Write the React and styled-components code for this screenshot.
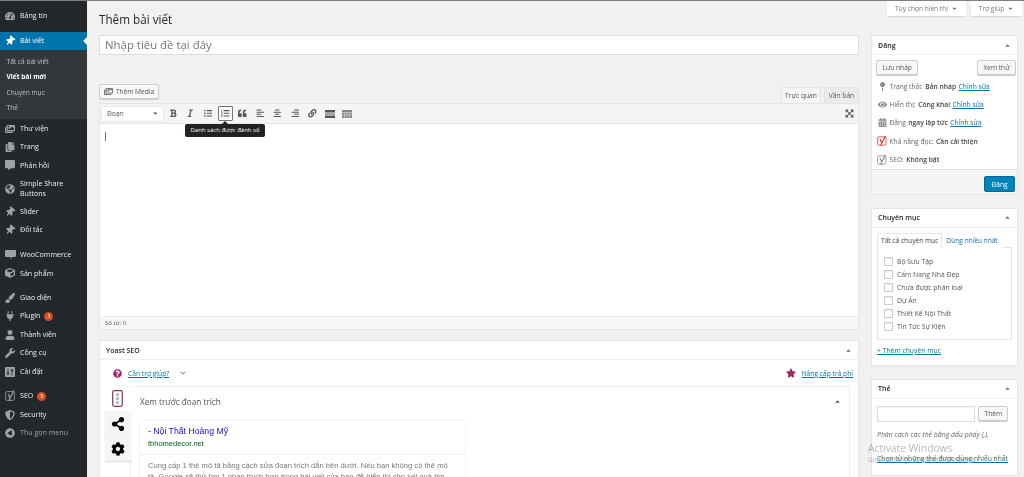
import React from 'react'
import styled, { createGlobalStyle } from 'styled-components'
import {
  FaTachometerAlt, FaThumbtack, FaImages, FaCopy, FaCommentAlt, FaShareAlt, FaCube, FaGlobeAmericas,
  FaPaintBrush, FaPlug, FaUser, FaWrench, FaShieldAlt, FaBold, FaItalic,
  FaListUl, FaListOl, FaQuoteLeft, FaAlignLeft, FaAlignCenter, FaAlignRight, FaLink,
  FaCog, FaStar, FaQuestionCircle, FaChevronDown, FaMapPin, FaEye, FaCalendarAlt,
  FaCaretUp, FaCaretDown, FaPlayCircle, FaExpandArrowsAlt,
} from 'react-icons/fa'

const GlobalStyle = createGlobalStyle`
  html, body { margin: 0; height: 477px; overflow: hidden; background: #f1f1f1; }
  body { font-family: "Open Sans", "Noto Sans", sans-serif; font-size: 8px; color: #444; }
  * { box-sizing: border-box; }
`

function YoastMark({ color }) {
  return (
    <svg width="11" height="12" viewBox="0 0 11 12">
      <rect x="0.6" y="1.6" width="8.8" height="8.8" rx="1.5" fill="none" stroke={color} strokeWidth="0.8" />
      <path d="M3 4l2 4-1 3M9 0.5L5 8" fill="none" stroke={color} strokeWidth="1.2" />
    </svg>
  )
}

function WooIcon() {
  return (
    <svg width="11" height="10" viewBox="0 0 11 10">
      <path d="M1 0h9a1 1 0 0 1 1 1v5a1 1 0 0 1-1 1H7L6 9.5 5.5 7H1a1 1 0 0 1-1-1V1a1 1 0 0 1 1-1z" fill="#9ea3a8" />
    </svg>
  )
}

function SettingsIcon() {
  return (
    <svg width="10" height="10" viewBox="0 0 10 10">
      <rect width="10" height="10" rx="1" fill="#9ea3a8" />
      <path d="M3 1.5v7M7 1.5v7" stroke="#23282d" strokeWidth="0.8" />
      <rect x="1.8" y="5.5" width="2.4" height="1.4" fill="#23282d" />
      <rect x="5.8" y="2.8" width="2.4" height="1.4" fill="#23282d" />
    </svg>
  )
}

function TrafficLight() {
  return (
    <svg width="11" height="17" viewBox="0 0 11 17">
      <rect x="0.7" y="0.7" width="9.6" height="15.6" rx="1.5" fill="none" stroke="#843760" strokeWidth="1.2" />
      <circle cx="5.5" cy="4.5" r="1.7" fill="#bbb" />
      <circle cx="5.5" cy="8.5" r="1.7" fill="#bbb" />
      <circle cx="5.5" cy="12.5" r="1.7" fill="#bbb" />
    </svg>
  )
}

function HrIcon() {
  return (
    <svg width="10" height="8" viewBox="0 0 10 8">
      <rect width="10" height="2.5" fill="#555" />
      <rect y="3.5" width="10" height="1" fill="#555" />
      <rect y="5.5" width="10" height="2.5" fill="#555" />
    </svg>
  )
}

function SinkIcon() {
  return (
    <svg width="10" height="8" viewBox="0 0 10 8">
      <rect width="10" height="8" fill="#888" />
      <path d="M0 2.5h10M0 5h10M2.5 2.5v5.500M5 2.500v5.500M7.500 2.500v5.500" stroke="#ddd" strokeWidth="0.6" />
    </svg>
  )
}

const Pin = styled(FaThumbtack)`
  transform: rotate(40deg);
`

const menuGroups = [
  [{ icon: <FaTachometerAlt />, label: 'Bảng tin' }],
  [
    { icon: <Pin color="#fff" />, label: 'Bài viết', active: true },
    { icon: <FaImages />, label: 'Thư viện' },
    { icon: <FaCopy />, label: 'Trang' },
    { icon: <FaCommentAlt />, label: 'Phản hồi' },
    { icon: <FaGlobeAmericas />, label: 'Simple Share Buttons', tall: true },
    { icon: <Pin />, label: 'Slider' },
    { icon: <Pin />, label: 'Đối tác' },
  ],
  [
    { icon: <WooIcon />, label: 'WooCommerce' },
    { icon: <FaCube />, label: 'Sản phẩm' },
  ],
  [
    { icon: <FaPaintBrush />, label: 'Giao diện' },
    { icon: <FaPlug />, label: 'Plugin', badge: 3 },
    { icon: <FaUser />, label: 'Thành viên' },
    { icon: <FaWrench />, label: 'Công cụ' },
    { icon: <SettingsIcon />, label: 'Cài đặt' },
  ],
  [
    { icon: <YoastMark color="#9ea3a8" />, label: 'SEO', badge: 5 },
    { icon: <FaShieldAlt />, label: 'Security' },
    { icon: <FaPlayCircle style={{ transform: 'scaleX(-1)' }} />, label: 'Thu gọn menu', muted: true },
  ],
]

const subItems = [
  { label: 'Tất cả bài viết' },
  { label: 'Viết bài mới', current: true },
  { label: 'Chuyên mục' },
  { label: 'Thẻ' },
]

const toolbarIcons = [
  { icon: <FaBold /> },
  { icon: <FaItalic /> },
  { icon: <FaListUl /> },
  { icon: <FaListOl />, active: true },
  { icon: <FaQuoteLeft /> },
  { icon: <FaAlignLeft /> },
  { icon: <FaAlignCenter /> },
  { icon: <FaAlignRight /> },
  { icon: <FaLink /> },
  { icon: <HrIcon /> },
  { icon: <SinkIcon /> },
]

const categories = ['Bộ Sưu Tập', 'Cẩm Nang Nhà Đẹp', 'Chưa được phân loại', 'Dự Án', 'Thiết Kế Nội Thất', 'Tin Tức Sự Kiện']

function App() {
  return (
    <Page>
      <GlobalStyle />
      <Sidebar>
        {menuGroups.map((group, i) => (
          <MenuGroup key={i}>
            {group.map(item => (
              <React.Fragment key={item.label}>
                <MenuItem $active={item.active} $tall={item.tall} $muted={item.muted}>
                  <MenuIcon>{item.icon}</MenuIcon>
                  <span>
                    {item.label}
                    {item.badge && <Badge>{item.badge}</Badge>}
                  </span>
                  {item.active && <ActiveArrow />}
                </MenuItem>
                {item.active && (
                  <SubMenu>
                    {subItems.map(s => (
                      <SubItem key={s.label} $current={s.current}>{s.label}</SubItem>
                    ))}
                  </SubMenu>
                )}
              </React.Fragment>
            ))}
          </MenuGroup>
        ))}
      </Sidebar>

      <Content>
        <TopTabs>
          <TopTab $width={79}>Tùy chọn hiển thị <FaCaretDown /></TopTab>
          <TopTab $width={51}>Trợ giúp <FaCaretDown /></TopTab>
        </TopTabs>

        <Columns>
          <MainCol>
            <Heading>Thêm bài viết</Heading>
            <TitleInput>Nhập tiêu đề tại đây</TitleInput>

            <EditorTop>
              <MediaButton><FaImages /> Thêm Media</MediaButton>
              <ModeTabs>
                <ModeTab $active $width={40}>Trực quan</ModeTab>
                <ModeTab $width={35}>Văn bản</ModeTab>
              </ModeTabs>
            </EditorTop>

            <Editor>
              <Toolbar>
                <FormatSelect>Đoạn <FaCaretDown /></FormatSelect>
                {toolbarIcons.map((t, i) => (
                  <ToolButton key={i} $active={t.active}>
                    {t.icon}
                    {t.active && <Tooltip>Danh sách được đánh số</Tooltip>}
                  </ToolButton>
                ))}
                <Expand><FaExpandArrowsAlt /></Expand>
              </Toolbar>
              <EditArea><Caret /></EditArea>
              <StatusBar>Số từ: 0</StatusBar>
            </Editor>

            <YoastBox>
              <BoxHeader>Yoast SEO <FaCaretUp /></BoxHeader>
              <HelpRow>
                <HelpGroup>
                  <FaQuestionCircle color="#a4286a" size={9} />
                  <HelpLink>Cần trợ giúp?</HelpLink>
                  <FaChevronDown color="#a4286a" size={6} opacity={0.6} style={{ marginLeft: 5 }} />
                </HelpGroup>
                <HelpGroup>
                  <FaStar color="#a4286a" size={10} />
                  <HelpLink>Nâng cấp trả phí</HelpLink>
                </HelpGroup>
              </HelpRow>
              <YoastBody>
                <SideTabs>
                  <SideTab $active><TrafficLight /></SideTab>
                  <SideTab><FaShareAlt /></SideTab>
                  <SideTab><FaCog /></SideTab>
                </SideTabs>
                <SnippetPanel>
                  <SnippetTitle>Xem trước đoạn trích <FaCaretUp /></SnippetTitle>
                  <Preview>
                    <PreviewHead>
                      <PreviewLink>- Nội Thất Hoàng Mỹ</PreviewLink>
                      <PreviewUrl>tbhomedecor.net</PreviewUrl>
                    </PreviewHead>
                    <PreviewText>
                      Cung cấp 1 thẻ mô tả bằng cách sửa đoạn trích dẫn bên dưới. Nếu bạn không có thẻ mô
                      tả. Google sẽ thử tìm 1 phần thích hợp trong bài viết của bạn để hiển thị cho kết quả tìm
                    </PreviewText>
                  </Preview>
                </SnippetPanel>
              </YoastBody>
            </YoastBox>
          </MainCol>

          <SideCol>
            <SideBox>
              <BoxHeader>Đăng <FaCaretUp /></BoxHeader>
              <PublishTop>
                <GrayButton>Lưu nháp</GrayButton>
                <GrayButton>Xem thử</GrayButton>
              </PublishTop>
              <MetaRow><MetaIcon><FaMapPin /></MetaIcon>Trạng thái: <b>Bản nháp</b> <a>Chỉnh sửa</a></MetaRow>
              <MetaRow><MetaIcon><FaEye /></MetaIcon>Hiển thị: <b>Công khai</b> <a>Chỉnh sửa</a></MetaRow>
              <MetaRow><MetaIcon><FaCalendarAlt /></MetaIcon>Đăng <b>ngay lập tức</b> <a>Chỉnh sửa</a></MetaRow>
              <MetaRow><MetaIcon><YoastMark color="#dc3232" /></MetaIcon>Khả năng đọc: <b>Cần cải thiện</b></MetaRow>
              <MetaRow><MetaIcon><YoastMark color="#888" /></MetaIcon>SEO: <b>Không bật</b></MetaRow>
              <PublishFoot><PrimaryButton>Đăng</PrimaryButton></PublishFoot>
            </SideBox>

            <SideBox>
              <BoxHeader>Chuyên mục <FaCaretUp /></BoxHeader>
              <BoxBody>
                <CatTabs>
                  <CatTab $active>Tất cả chuyên mục</CatTab>
                  <CatTab>Dùng nhiều nhất</CatTab>
                </CatTabs>
                <CatList>
                  {categories.map(c => (
                    <CatItem key={c}><Check />{c}</CatItem>
                  ))}
                </CatList>
                <AddLink>+ Thêm chuyên mục</AddLink>
              </BoxBody>
            </SideBox>

            <SideBox>
              <BoxHeader>Thẻ <FaCaretUp /></BoxHeader>
              <BoxBody>
                <TagRow>
                  <TagInput />
                  <GrayButton>Thêm</GrayButton>
                </TagRow>
                <TagHint>Phân cách các thẻ bằng dấu phẩy (,).</TagHint>
                <TagLink>Chọn từ những thẻ được dùng nhiều nhất</TagLink>
              </BoxBody>
            </SideBox>
          </SideCol>
        </Columns>
      </Content>

      <Watermark>
        <WatermarkTitle>Activate Windows</WatermarkTitle>
        <div>Go to Settings to activate Windows.</div>
      </Watermark>
    </Page>
  )
}

export default App

const Page = styled.div`
  display: flex;
  width: 1024px;
  height: 477px;
  overflow: hidden;
  position: relative;
  border-top: 1px solid #7d7f82;
  filter: blur(0.3px);
`

const Sidebar = styled.nav`
  width: 87px;
  flex: none;
  background: #23282d;
  padding-top: 6px;
  color: #eee;
`

const MenuGroup = styled.div`
  margin-bottom: 6.4px;
`

const MenuItem = styled.div`
  position: relative;
  display: flex;
  align-items: center;
  min-height: ${p => (p.$tall ? '28px' : '18.4px')};
  line-height: 9.5px;
  font-size: 7.1px;
  background: ${p => (p.$active ? '#0073aa' : 'transparent')};
  color: ${p => (p.$muted ? '#9ea3a8' : p.$active ? '#fff' : '#eee')};
`

const MenuIcon = styled.div`
  width: 20px;
  flex: none;
  display: flex;
  justify-content: center;
  font-size: 10px;
  color: #9ea3a8;
`

const ActiveArrow = styled.div`
  position: absolute;
  right: 0;
  top: 5px;
  border: 4px solid transparent;
  border-right-color: #f1f1f1;
  border-left: 0;
`

const Badge = styled.span`
  display: inline-block;
  width: 9px;
  height: 9px;
  line-height: 9px;
  margin-left: 4px;
  border-radius: 50%;
  background: #d54e21;
  color: #fff;
  font-size: 5.5px;
  text-align: center;
`

const SubMenu = styled.div`
  background: #32373c;
  padding: 4px 0 4px 6.5px;
`

const SubItem = styled.div`
  height: 15.3px;
  line-height: 15.3px;
  font-size: 6.6px;
  color: ${p => (p.$current ? '#fff' : 'rgba(240,245,250,0.7)')};
  font-weight: ${p => (p.$current ? 700 : 400)};
`

const Content = styled.main`
  flex: 1;
  padding: 0 6px 0 12px;
  min-width: 0;
`

const TopTabs = styled.div`
  height: 0;
  display: flex;
  justify-content: flex-end;
  gap: 5px;
  margin-right: -4px;
`

const TopTab = styled.div`
  width: ${p => p.$width}px;
  height: 15px;
  flex: none;
  display: flex;
  align-items: center;
  justify-content: center;
  gap: 3px;
  background: #fff;
  box-shadow: 0 1px 1px rgba(0,0,0,0.1);
  font-size: 6.6px;
  color: #72777c;
  svg { font-size: 7px; }
`

const Columns = styled.div`
  display: grid;
  grid-template-columns: 760px 147px;
  gap: 12px;
`

const MainCol = styled.div`
  min-width: 0;
`

const SideCol = styled.div`
  padding-top: 34px;
  display: flex;
  flex-direction: column;
  gap: 13px;
`

const Heading = styled.h1`
  margin: 0;
  height: 34px;
  padding-top: 10px;
  font-size: 11.7px;
  line-height: 17px;
  font-weight: 400;
  color: #23282d;
`

const TitleInput = styled.div`
  height: 20px;
  background: #fff;
  border: 1px solid #ddd;
  padding-left: 5px;
  line-height: 18px;
  font-size: 11.4px;
  color: #72777c;
`

const EditorTop = styled.div`
  margin-top: 28px;
  height: 20px;
  display: flex;
  justify-content: space-between;
  align-items: flex-end;
`

const MediaButton = styled.div`
  align-self: flex-start;
  margin-top: 1px;
  width: 60px;
  height: 15px;
  display: flex;
  align-items: center;
  justify-content: center;
  gap: 3px;
  background: #f7f7f7;
  border: 1px solid #ccc;
  border-radius: 2px;
  box-shadow: 0 1px 0 #ccc;
  color: #555;
  font-size: 6.6px;
  svg { font-size: 9px; color: #777; }
`

const ModeTabs = styled.div`
  display: flex;
  gap: 3px;
`

const ModeTab = styled.div`
  width: ${p => p.$width}px;
  height: 16px;
  line-height: 16px;
  text-align: center;
  font-size: 6.7px;
  color: #555;
  background: ${p => (p.$active ? '#f5f5f5' : '#ebebeb')};
  border: 1px solid #e2e2e2;
  border-bottom: 0;
`

const Editor = styled.div`
  background: #fff;
  border: 1px solid #e5e5e5;
`

const Toolbar = styled.div`
  position: relative;
  height: 20px;
  padding: 0 2px;
  display: flex;
  align-items: center;
  gap: 2.9px;
  background: #f5f5f5;
  border-bottom: 1px solid #e5e5e5;
`

const FormatSelect = styled.div`
  width: 61px;
  height: 14px;
  padding: 0 4px 0 5px;
  display: flex;
  justify-content: space-between;
  align-items: center;
  background: #fff;
  box-shadow: 0 0 1px rgba(0,0,0,0.3);
  font-size: 6.6px;
  color: #555;
`

const ToolButton = styled.div`
  position: relative;
  width: 14.5px;
  height: 14.5px;
  display: flex;
  align-items: center;
  justify-content: center;
  font-size: 8.5px;
  color: #555;
  background: ${p => (p.$active ? '#fafafa' : 'transparent')};
  border: ${p => (p.$active ? '1px solid #777' : '1px solid transparent')};
  border-radius: 1px;
`

const Tooltip = styled.div`
  position: absolute;
  z-index: 3;
  left: -34px;
  top: 17px;
  width: 80px;
  height: 13px;
  line-height: 13px;
  text-align: center;
  white-space: nowrap;
  background: #222;
  border-radius: 2px;
  color: #fff;
  font-size: 6px;
  &::before {
    content: "";
    position: absolute;
    left: 37px;
    top: -3px;
    border: 3px solid transparent;
    border-top: 0;
    border-bottom-color: #222;
  }
`

const Expand = styled.div`
  margin-left: auto;
  margin-right: 2px;
  display: flex;
  font-size: 9px;
  color: #555;
`

const EditArea = styled.div`
  height: 192px;
  padding: 8px 5px;
`

const Caret = styled.div`
  width: 1px;
  height: 9px;
  background: #777;
`

const StatusBar = styled.div`
  height: 13px;
  padding-left: 5px;
  line-height: 13px;
  background: #f7f7f7;
  border-top: 1px solid #eee;
  font-size: 6px;
  color: #555;
`

const YoastBox = styled.section`
  margin-top: 10px;
  height: 140px;
  background: #fff;
  border: 1px solid #e5e5e5;
`

const BoxHeader = styled.div`
  height: 19px;
  padding: 0 6px;
  display: flex;
  align-items: center;
  justify-content: space-between;
  border-bottom: 1px solid #eee;
  font-size: 7px;
  font-weight: 600;
  color: #23282d;
  svg { font-size: 7px; color: #72777c; }
`

const HelpRow = styled.div`
  height: 26px;
  padding: 0 5px 0 13px;
  display: flex;
  align-items: center;
  justify-content: space-between;
`

const HelpGroup = styled.div`
  display: flex;
  align-items: center;
  gap: 6px;
`

const HelpLink = styled.a`
  font-size: 6.7px;
  color: #0073aa;
  text-decoration: underline;
`

const YoastBody = styled.div`
  display: flex;
  padding: 0 8px 0 5px;
`

const SideTabs = styled.div`
  width: 25px;
  flex: none;
  display: flex;
  flex-direction: column;
  position: relative;
  z-index: 1;
`

const SideTab = styled.div`
  width: 25.5px;
  height: 25px;
  display: flex;
  align-items: center;
  justify-content: center;
  font-size: 14px;
  color: #000;
  background: ${p => (p.$active ? '#fff' : '#f5f5f5')};
  box-shadow: ${p => (p.$active ? 'none' : '0 1px 1px rgba(0,0,0,0.12)')};
`

const SnippetPanel = styled.div`
  flex: 1;
  height: 100px;
  border: 1px solid #eee;
  border-bottom: 0;
  padding: 0 8px 0 9px;
`

const SnippetTitle = styled.div`
  height: 34px;
  padding-bottom: 6px;
  display: flex;
  align-items: center;
  justify-content: space-between;
  font-size: 8.2px;
  color: #555;
  svg { font-size: 7px; color: #555; }
`

const Preview = styled.div`
  width: 325px;
  box-shadow: 0 0 2px rgba(0,0,0,0.15);
`

const PreviewHead = styled.div`
  padding: 3px 8px 5px;
  border-bottom: 1px solid #eee;
  font-family: "Liberation Sans", Arial, sans-serif;
`

const PreviewLink = styled.div`
  font-size: 8.7px;
  line-height: 14px;
  color: #1e0fbe;
`

const PreviewUrl = styled.div`
  font-size: 7.5px;
  line-height: 11px;
  color: #006621;
`

const PreviewText = styled.div`
  padding: 5px 14px 4px 8px;
  font-family: "Liberation Sans", Arial, sans-serif;
  font-size: 7.6px;
  line-height: 11px;
  color: #777;
`

const SideBox = styled.section`
  background: #fff;
  border: 1px solid #e5e5e5;
`

const PublishTop = styled.div`
  padding: 5px 1px 2px 4px;
  display: flex;
  justify-content: space-between;
`

const GrayButton = styled.div`
  height: 15px;
  padding: 0 5.5px;
  line-height: 13px;
  background: #f7f7f7;
  border: 1px solid #ccc;
  border-radius: 2px;
  box-shadow: 0 1px 0 #ccc;
  font-size: 6.6px;
  color: #555;
`

const MetaRow = styled.div`
  height: 18.4px;
  padding-left: 5px;
  display: flex;
  align-items: center;
  gap: 2.5px;
  white-space: nowrap;
  font-size: 6.7px;
  color: #666;
  b { color: #444; font-weight: 600; }
  a { color: #0073aa; text-decoration: underline; }
`

const MetaIcon = styled.span`
  width: 10.5px;
  margin-right: -0.5px;
  display: flex;
  justify-content: center;
  font-size: 9px;
  color: #82878c;
`

const PublishFoot = styled.div`
  height: 25px;
  padding: 6px 2px 0 0;
  display: flex;
  justify-content: flex-end;
  background: #f5f5f5;
  border-top: 1px solid #ddd;
`

const PrimaryButton = styled.div`
  width: 31px;
  height: 16px;
  line-height: 15px;
  text-align: center;
  background: #0085ba;
  border: 1px solid #006799;
  border-radius: 2px;
  font-size: 6.6px;
  color: #fff;
`

const BoxBody = styled.div`
  padding: 5px;
`

const CatTabs = styled.div`
  display: flex;
  height: 14px;
`

const CatTab = styled.div`
  padding: 0 3px;
  line-height: 13px;
  font-size: 6.6px;
  white-space: nowrap;
  color: ${p => (p.$active ? '#444' : '#0073aa')};
  background: #fff;
  border: ${p => (p.$active ? '1px solid #e5e5e5' : '1px solid transparent')};
  border-bottom: 0;
  margin-bottom: -1px;
  position: relative;
  z-index: 1;
`

const CatList = styled.div`
  height: 93px;
  padding: 7px 6px;
  border: 1px solid #e5e5e5;
`

const CatItem = styled.div`
  height: 13px;
  display: flex;
  align-items: center;
  gap: 4px;
  font-size: 6.8px;
  color: #555;
`

const Check = styled.span`
  width: 9px;
  height: 9px;
  border: 1px solid #ccc;
  box-shadow: inset 0 1px 1px rgba(0,0,0,0.08);
`

const AddLink = styled.a`
  display: block;
  margin-top: 6px;
  height: 14px;
  line-height: 10px;
  font-size: 6.8px;
  color: #0073aa;
  text-decoration: underline;
`

const TagRow = styled.div`
  display: flex;
  gap: 3px;
  margin-top: 2px;
`

const TagInput = styled.div`
  width: 98px;
  height: 16px;
  border: 1px solid #ddd;
  box-shadow: inset 0 1px 1px rgba(0,0,0,0.05);
`

const TagHint = styled.div`
  margin-top: 8px;
  font-size: 6.9px;
  font-style: italic;
  line-height: 10px;
  color: #666;
`

const TagLink = styled.a`
  display: block;
  margin-top: 14px;
  padding-bottom: 6px;
  font-size: 6.75px;
  line-height: 10px;
  white-space: nowrap;
  color: #0073aa;
  text-decoration: underline;
`

const Watermark = styled.div`
  position: absolute;
  left: 868px;
  top: 440px;
  color: rgba(120,120,120,0.55);
  font-size: 6.6px;
  white-space: nowrap;
  pointer-events: none;
`

const WatermarkTitle = styled.div`
  font-size: 10.3px;
  line-height: 14px;
`
